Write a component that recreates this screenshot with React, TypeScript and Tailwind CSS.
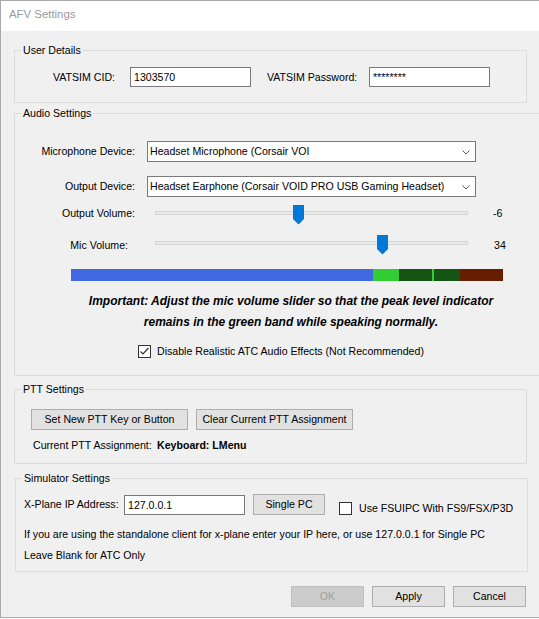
import type { ReactNode } from "react";
import { clsx } from "clsx";

function GroupBox({
  title,
  className,
  children,
}: {
  title: string;
  className?: string;
  children: ReactNode;
}) {
  return (
    <fieldset className={clsx("w-[513px] border border-[#dcdcdc] p-0", className)}>
      <legend className="ml-[6px] px-[2px] leading-[13px]">{title}</legend>
      {children}
    </fieldset>
  );
}

function TextBox({ value, className }: { value: string; className?: string }) {
  return (
    <div
      className={clsx(
        "h-[20px] w-[121px] border border-[#7a7a7a] bg-white pl-[3px] leading-[18px]",
        className,
      )}
    >
      {value}
    </div>
  );
}

function Combo({ value }: { value: string }) {
  return (
    <div className="ml-[12px] flex h-[21px] w-[329px] items-center justify-between border border-[#7a7a7a] bg-white pl-[2px] pr-[5px]">
      <span>{value}</span>
      <svg width="8" height="5" viewBox="0 0 8 5" className="mt-[1px]">
        <polyline points="0.5,0.5 4,4 7.5,0.5" fill="none" stroke="#606060" strokeWidth="1" />
      </svg>
    </div>
  );
}

function Button({
  label,
  className,
  disabled,
}: {
  label: string;
  className?: string;
  disabled?: boolean;
}) {
  return (
    <div
      className={clsx(
        "flex h-[21px] items-center justify-center border",
        disabled
          ? "border-[#bfbfbf] bg-[#cccccc] text-[#a0a0a0]"
          : "border-[#adadad] bg-[#e1e1e1]",
        className,
      )}
    >
      {label}
    </div>
  );
}

// trackbar: thin track with the blue down-pointing thumb laid over it
function Slider({ thumb }: { thumb: number }) {
  return (
    <div className="relative h-[20px] w-[313px] pt-[6px]">
      <div className="h-[4px] border border-[#d6d6d6] bg-[#e7eaea]" />
      <svg
        width="11"
        height="20"
        viewBox="0 0 11 20"
        className="absolute top-0"
        style={{ left: thumb }}
      >
        <polygon points="0,0 11,0 11,14 5.5,19.5 0,14" fill="#0078d7" />
      </svg>
    </div>
  );
}

function CheckBox({ checked }: { checked?: boolean }) {
  return (
    <div className="h-[13px] w-[13px] shrink-0 border border-[#333333] bg-white">
      {checked && (
        <svg width="11" height="11" viewBox="0 0 11 11">
          <polyline points="1.5,5.5 4,8 9.5,2" fill="none" stroke="#333333" strokeWidth="1.2" />
        </svg>
      )}
    </div>
  );
}

export default function App() {
  return (
    <div className="h-[618px] w-[539px] border-y border-l border-[#aaaaaa] bg-[#f0f0f0] font-['Liberation_Sans',Arial,sans-serif] text-[10.6px] leading-[13px] text-black">
      {/* title bar */}
      <div className="flex h-[30px] items-center bg-white pb-[3px] pl-[8px] text-[11.4px] text-[#9a9a9a]">
        AFV Settings
      </div>

      <div className="flex flex-col pl-[13px]">
        <GroupBox title="User Details" className="mt-[13px] pb-[15px]">
          <div className="mt-[10px] flex items-center">
            <span className="ml-[38px] w-[77px]">VATSIM CID:</span>
            <TextBox value="1303570" />
            <span className="ml-[16px] w-[102px]">VATSIM Password:</span>
            <TextBox value="********" className="pl-[2px]" />
          </div>
        </GroupBox>

        <GroupBox title="Audio Settings" className="mt-[4px] pb-[17px]">
          <div className="mt-[21px] flex items-center">
            <span className="w-[120px] text-right">Microphone Device:</span>
            <Combo value="Headset Microphone (Corsair VOI" />
          </div>
          <div className="mt-[14px] flex items-center">
            <span className="w-[120px] text-right">Output Device:</span>
            <Combo value="Headset Earphone (Corsair VOID PRO USB Gaming Headset)" />
          </div>
          <div className="mt-[8px] flex items-start">
            <span className="mt-[2px] w-[120px] text-right">Output Volume:</span>
            <div className="ml-[20px]">
              <Slider thumb={138} />
            </div>
            <span className="ml-[25px] mt-[2px]">-6</span>
          </div>
          <div className="mt-[10px] flex items-start">
            <span className="mt-[4px] w-[113px] text-right">Mic Volume:</span>
            <div className="ml-[27px]">
              <Slider thumb={222} />
            </div>
            <span className="ml-[26px] mt-[4px]">34</span>
          </div>
          <div className="ml-[56px] mt-[14px] flex h-[12px] w-[432px]">
            <div className="w-[302px] bg-[#4169e1]" />
            <div className="w-[26px] bg-[#32cd32]" />
            <div className="w-[33px] bg-[#145414]" />
            <div className="w-[2px] bg-[#32cd32]" />
            <div className="w-[26px] bg-[#145414]" />
            <div className="w-[43px] bg-[#661e00]" />
          </div>
          <p className="ml-[56px] mt-[10px] w-[470px] -translate-x-[15px] text-center text-[12px] font-bold italic leading-[21px]">
            Important: Adjust the mic volume slider so that the peak level indicator
            <br />
            remains in the green band while speaking normally.
          </p>
          <div className="ml-[123px] mt-[12px] flex items-center gap-[6px]">
            <CheckBox checked />
            <span>Disable Realistic ATC Audio Effects (Not Recommended)</span>
          </div>
        </GroupBox>

        <GroupBox title="PTT Settings" className="mt-[7px] pb-[11px]">
          <div className="ml-[16px] mt-[13px] flex gap-[8px]">
            <Button label="Set New PTT Key or Button" className="w-[157px]" />
            <Button label="Clear Current PTT Assignment" className="w-[157px]" />
          </div>
          <div className="ml-[18px] mt-[9px] flex">
            <span className="w-[124px]">Current PTT Assignment:</span>
            <span className="font-bold">Keyboard: LMenu</span>
          </div>
        </GroupBox>

        <GroupBox title="Simulator Settings" className="ml-[1px] mt-[8px] pb-[5px]">
          <div className="mt-[9px] flex items-start">
            <span className="ml-[8px] mt-[4px] w-[100px]">X-Plane IP Address:</span>
            <TextBox value="127.0.0.1" className="mt-[1px]" />
            <Button label="Single PC" className="ml-[8px] w-[72px]" />
            <div className="ml-[14px] mt-[8px] flex items-center gap-[7px]">
              <CheckBox />
              <span>Use FSUIPC With FS9/FSX/P3D</span>
            </div>
          </div>
          <p className="ml-[8px] mt-[9px] leading-[21px]">
            If you are using the standalone client for x-plane enter your IP here, or use 127.0.0.1 for Single PC
            <br />
            Leave Blank for ATC Only
          </p>
        </GroupBox>

        <div className="mr-[13px] mt-[14px] flex justify-end gap-[8px]">
          <Button label="OK" disabled className="w-[73px]" />
          <Button label="Apply" className="w-[73px]" />
          <Button label="Cancel" className="w-[73px]" />
        </div>
      </div>
    </div>
  );
}
